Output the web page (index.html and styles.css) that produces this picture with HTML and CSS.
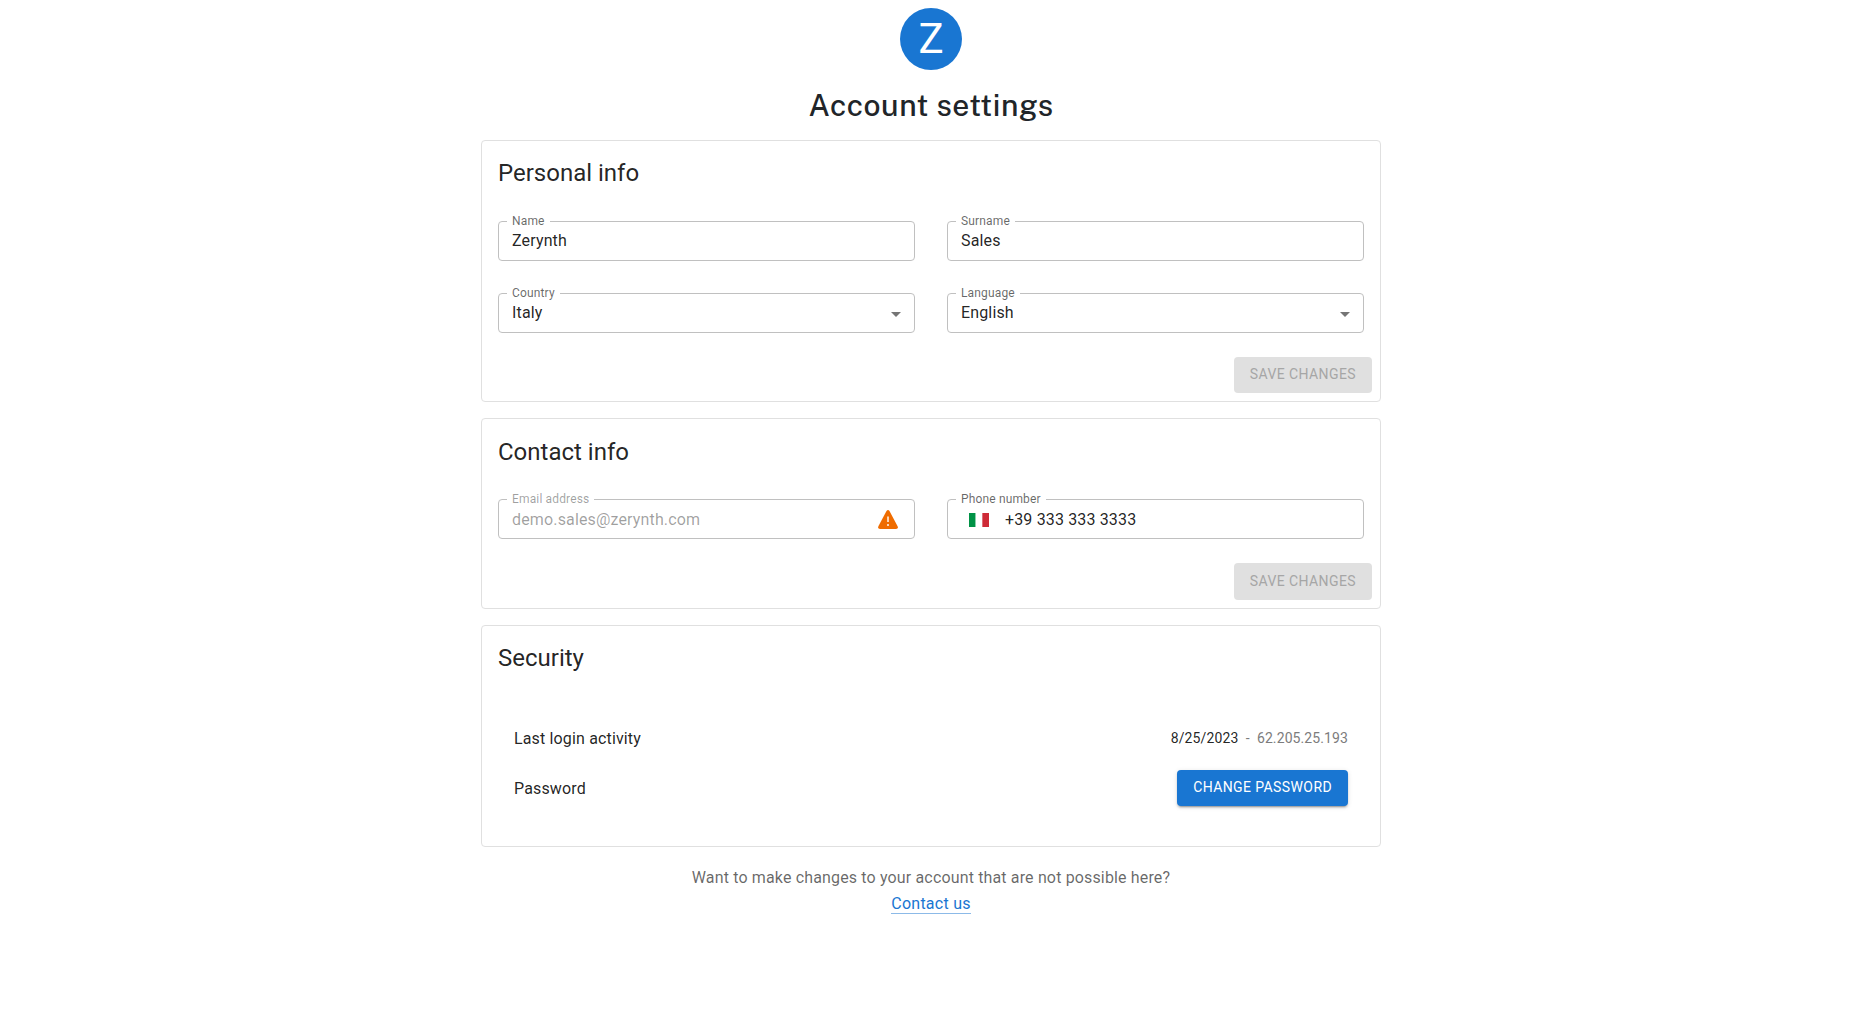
FILE: index.html
```html
<!DOCTYPE html>
<html lang="en">
<head>
<meta charset="utf-8">
<title>Account settings</title>
<link rel="stylesheet" href="styles.css">
</head>
<body>
<main class="page">
  <div class="avatar">Z</div>
  <h1 class="title">Account settings</h1>

  <section class="card">
    <h2 class="heading">Personal info</h2>
    <div class="grid">
      <fieldset class="field"><legend>Name</legend><span class="value">Zerynth</span></fieldset>
      <fieldset class="field"><legend>Surname</legend><span class="value">Sales</span></fieldset>
      <fieldset class="field"><legend>Country</legend><span class="value">Italy</span><svg class="arrow" viewBox="0 0 24 24"><path d="M7 10l5 5 5-5z"/></svg></fieldset>
      <fieldset class="field"><legend>Language</legend><span class="value">English</span><svg class="arrow" viewBox="0 0 24 24"><path d="M7 10l5 5 5-5z"/></svg></fieldset>
    </div>
    <div class="actions"><button class="button" disabled>Save changes</button></div>
  </section>

  <section class="card contact">
    <h2 class="heading">Contact info</h2>
    <div class="grid">
      <fieldset class="field muted"><legend>Email address</legend><span class="value">demo.sales@zerynth.com</span><svg class="warning" viewBox="0 0 20 19"><path fill="#ef6c00" d="M8.5 1Q10-.9 11.5 1l8.1 15.2Q20.6 18.700 18 19H2Q-.6 18.700.4 16.200z"/><path fill="#fff" opacity=".8" d="M9.1 6.500h1.800v5.500H9.100zM9.100 14h1.800v2H9.100z"/></svg></fieldset>
      <fieldset class="field"><legend>Phone number</legend><svg class="flag" viewBox="0 0 20 14" preserveAspectRatio="none"><path fill="#009246" d="M0 0h6.67v14H0z"/><path fill="#fff" d="M6.67 0h6.66v14H6.67z"/><path fill="#ce2b37" d="M13.33 0H20v14h-6.67z"/></svg><span class="value">+39 333 333 3333</span></fieldset>
    </div>
    <div class="actions"><button class="button" disabled>Save changes</button></div>
  </section>

  <section class="card security">
    <h2 class="heading">Security</h2>
    <div class="row login"><span class="label">Last login activity</span><span class="activity">8/25/2023 <span class="ip">&nbsp;-&nbsp; 62.205.25.193</span></span></div>
    <div class="row"><span class="label">Password</span><button class="button primary">Change password</button></div>
  </section>

  <footer class="footer">
    <p>Want to make changes to your account that are not possible here?</p>
    <a class="link">Contact us</a>
  </footer>
</main>
</body>
</html>
```

FILE: styles.css
```css
* { box-sizing: border-box; }
body { margin: 0; padding-right: 1px; background: #fff; color: rgba(0,0,0,.87); font: 400 16px/24px Roboto, sans-serif; letter-spacing: .15px; }
.page { width: 900px; margin: 0 auto; padding-top: 8px; display: flex; flex-direction: column; align-items: center; }
.avatar { width: 62px; height: 62px; border-radius: 50%; background: #1976d2; color: #fff; font-size: 42px; letter-spacing: 0; display: flex; align-items: center; justify-content: center; }
.title { margin: 16px 0; font: 500 30px/38px "Public Sans", Inter, sans-serif; letter-spacing: .5px; color: #212529; }
.card { width: 100%; border: 1px solid #e0e0e0; border-radius: 4px; margin-bottom: 16px; padding: 16px 16px 8px; }
.heading { margin: 0; font-weight: 400; font-size: 24px; line-height: 32px; letter-spacing: 0; }
.grid { display: grid; grid-template-columns: 1fr 1fr; gap: 24px 32px; margin-top: 24px; }
.field { min-width: 0; height: 48px; margin: 0; padding: 0 8px 7px; border: 1px solid #c0c0c0; border-radius: 4px; display: flex; align-items: center; }
.field legend { padding: 0 5px; font-size: 12px; line-height: 16px; color: rgba(0,0,0,.6); }
.value { margin-left: 5px; }
.arrow { width: 24px; height: 24px; margin: 1px -2px 0 auto; fill: #757575; }
.warning { width: 20px; height: 19px; margin: 0 8px 1px auto; }
.flag { width: 20px; height: 14px; margin: 0 11px 0 13px; }
.muted .value, .muted legend { color: rgba(0,0,0,.38); }
.actions { display: flex; justify-content: flex-end; margin: 24px -8px 0 0; }
.button { height: 36px; border: 0; border-radius: 4px; padding: 0 16px 2px; font: 400 14px/24px Roboto, sans-serif; letter-spacing: .4px; text-transform: uppercase; background: #e0e0e0; color: #a6a6a6; }
.contact .heading { padding-top: 1px; }
.contact .grid { margin-top: 23px; }
.contact .field { padding-bottom: 5px; }
.contact .button { height: 37px; padding-bottom: 1px; }
.primary { background: #1976d2; color: #fff; box-shadow: 0 3px 1px -2px rgba(0,0,0,.2), 0 2px 2px rgba(0,0,0,.14), 0 1px 5px rgba(0,0,0,.12); }
.security { height: 222px; }
.row { display: flex; justify-content: space-between; align-items: center; padding: 0 16px; height: 50px; }
.login { margin-top: 39px; }
.label { padding-top: 1px; }
.activity { font-size: 14px; }
.ip { color: #7c7c7c; letter-spacing: .1px; }
.footer { margin-top: 2px; text-align: center; line-height: 26px; color: rgba(0,0,0,.6); }
.footer p { margin: 0; }
.link { display: inline-block; line-height: 18px; color: #1976d2; letter-spacing: .25px; border-bottom: 1px solid #8cbae8; }
```
